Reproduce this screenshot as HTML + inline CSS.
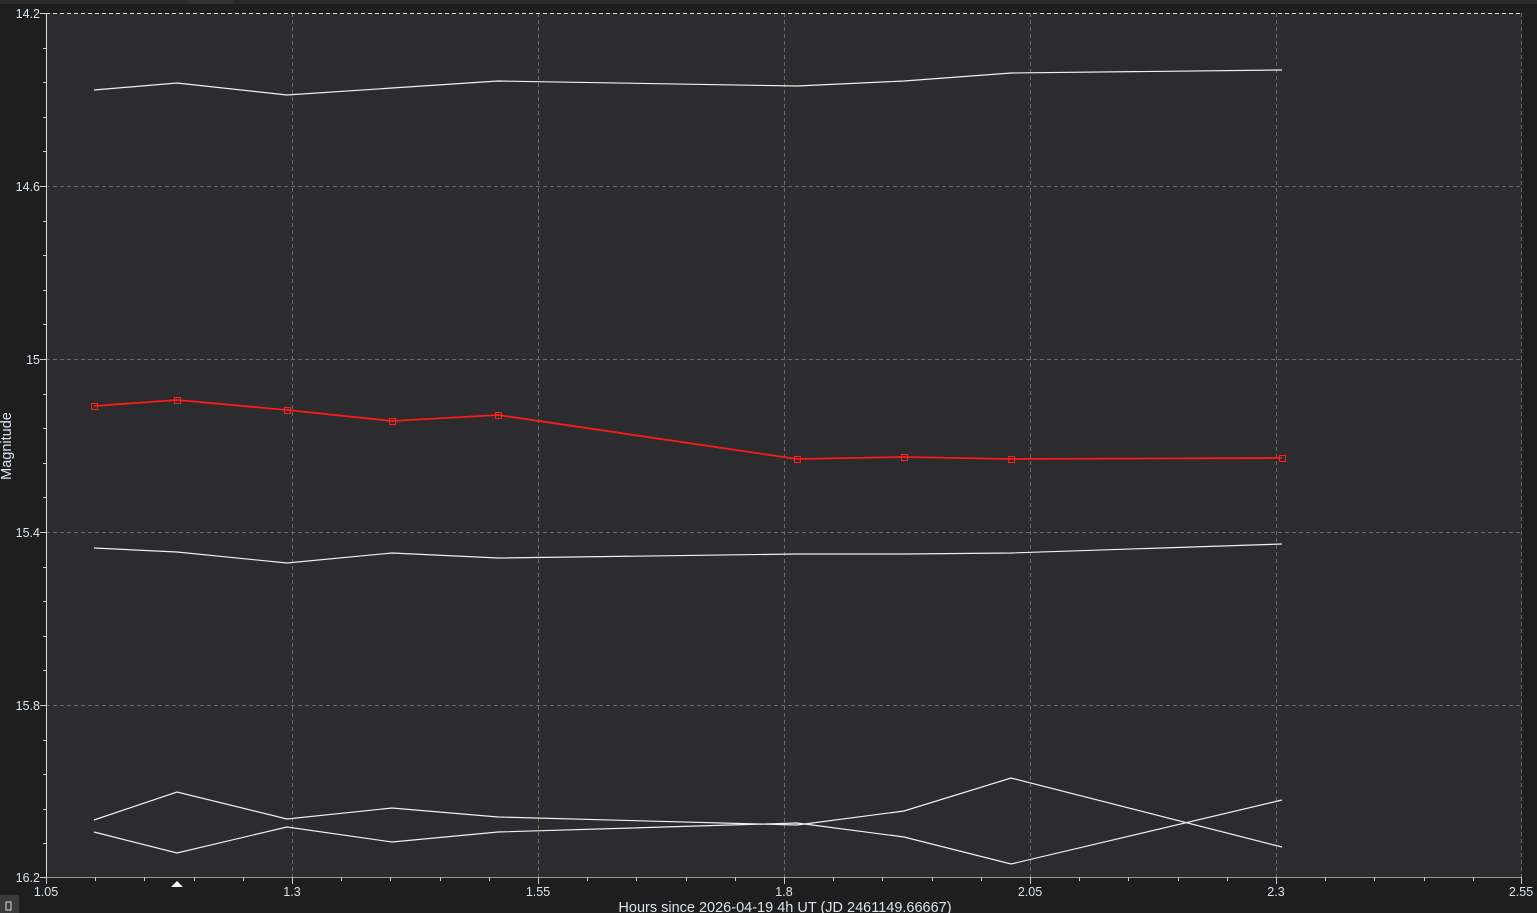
<!DOCTYPE html>
<html><head><style>
html,body{margin:0;padding:0;background:#1e1e1e;width:1537px;height:913px;overflow:hidden}
svg{display:block;font-family:"Liberation Sans",sans-serif}
</style></head><body>
<svg width="1537" height="913" viewBox="0 0 1537 913">
<rect x="0" y="0" width="1537" height="913" fill="#1e1e1e"/>
<rect x="0" y="0" width="1537" height="4" fill="#2a2a2a"/>
<rect x="188" y="0" width="45" height="4" fill="#333"/>
<rect x="46" y="13" width="1476" height="864" fill="#2c2c2f"/>
<g stroke="#6a6a6a" stroke-dasharray="4,3" stroke-width="1">
<line x1="292.5" y1="13" x2="292.5" y2="877"/>
<line x1="538.5" y1="13" x2="538.5" y2="877"/>
<line x1="784.5" y1="13" x2="784.5" y2="877"/>
<line x1="1030.5" y1="13" x2="1030.5" y2="877"/>
<line x1="1276.5" y1="13" x2="1276.5" y2="877"/>
<line x1="1521.5" y1="13" x2="1521.5" y2="877"/>
<line x1="46" y1="186.5" x2="1522" y2="186.5"/>
<line x1="46" y1="359.5" x2="1522" y2="359.5"/>
<line x1="46" y1="532.5" x2="1522" y2="532.5"/>
<line x1="46" y1="705.5" x2="1522" y2="705.5"/>
</g>
<line x1="46" y1="13.5" x2="1522" y2="13.5" stroke="#ddd" stroke-dasharray="4,3"/>
<line x1="46.5" y1="13" x2="46.5" y2="877" stroke="#ddd"/>
<line x1="46" y1="877.5" x2="1522" y2="877.5" stroke="#999"/>
<g stroke="#ccc" stroke-width="1">
<path d="M40 13.5h6M40 186.5h6M40 359.5h6M40 532.5h6M40 705.5h6M40 877.5h6M43 48.5h3M43 82.5h3M43 117.5h3M43 151.5h3M43 221.5h3M43 255.5h3M43 290.5h3M43 324.5h3M43 394.5h3M43 428.5h3M43 463.5h3M43 497.5h3M43 567.5h3M43 601.5h3M43 636.5h3M43 670.5h3M43 740.5h3M43 774.5h3M43 809.5h3M43 843.5h3"/>
<path d="M46.5 877v7M292.5 877v7M538.5 877v7M784.5 877v7M1030.5 877v7M1276.5 877v7M1521.5 877v7M95.5 877v4M144.5 877v4M194.5 877v4M243.5 877v4M341.5 877v4M390.5 877v4M440.5 877v4M489.5 877v4M587.5 877v4M636.5 877v4M686.5 877v4M735.5 877v4M833.5 877v4M882.5 877v4M932.5 877v4M981.5 877v4M1079.5 877v4M1128.5 877v4M1178.5 877v4M1227.5 877v4M1325.5 877v4M1374.5 877v4M1424.5 877v4M1473.5 877v4"/>
</g>
<polygon points="171,887 177,881 183,887" fill="#fff"/>
<g fill="none" stroke="#f0f0f0" stroke-width="1.2">
<polyline points="94,90 177,83 287,95 392,88 498,81 797,86 904,81 1011,73 1282,70"/>
<polyline points="94,548 177,552 287,563 392,553 498,558 797,554 904,554 1011,553 1282,544"/>
<polyline points="94,820 177,792 287,819 392,808 498,817 797,825 904,811 1011,778 1282,847"/>
<polyline points="94,832 177,853 287,827 392,842 498,832 797,823 904,837 1011,864 1282,800"/>
</g>
<g fill="none" stroke="#ff1a1a" stroke-width="1.8">
<polyline points="94,406 177,400 287,410 392,421 498,415 797,459 904,457 1011,459 1282,458"/>
</g>
<g fill="none" stroke="#ff2020" stroke-width="1">
<rect x="91.5" y="403.5" width="6" height="6"/><rect x="174.5" y="397.5" width="6" height="6"/><rect x="284.5" y="407.5" width="6" height="6"/><rect x="389.5" y="418.5" width="6" height="6"/><rect x="495.5" y="412.5" width="6" height="6"/><rect x="794.5" y="456.5" width="6" height="6"/><rect x="901.5" y="454.5" width="6" height="6"/><rect x="1008.5" y="456.5" width="6" height="6"/><rect x="1279.5" y="455.5" width="6" height="6"/>
</g>
<g fill="#dde4ee" font-size="12.5">
<text x="40" y="18" text-anchor="end">14.2</text>
<text x="40" y="191" text-anchor="end">14.6</text>
<text x="40" y="364" text-anchor="end">15</text>
<text x="40" y="537" text-anchor="end">15.4</text>
<text x="40" y="710" text-anchor="end">15.8</text>
<text x="40" y="882" text-anchor="end">16.2</text>
<text x="46" y="896" text-anchor="middle">1.05</text>
<text x="292" y="896" text-anchor="middle">1.3</text>
<text x="538" y="896" text-anchor="middle">1.55</text>
<text x="784" y="896" text-anchor="middle">1.8</text>
<text x="1030" y="896" text-anchor="middle">2.05</text>
<text x="1276" y="896" text-anchor="middle">2.3</text>
<text x="1521" y="896" text-anchor="middle">2.55</text>
<text x="785" y="912" text-anchor="middle" font-size="14.5">Hours since 2026-04-19 4h UT (JD 2461149.66667)</text>
<text transform="translate(11,446) rotate(-90)" text-anchor="middle" font-size="14.5">Magnitude</text>
</g>
<rect x="0" y="895" width="19" height="18" fill="#3a3a3a"/>
<rect x="6" y="902" width="5" height="8" fill="none" stroke="#ddd"/>
</svg>
</body></html>
